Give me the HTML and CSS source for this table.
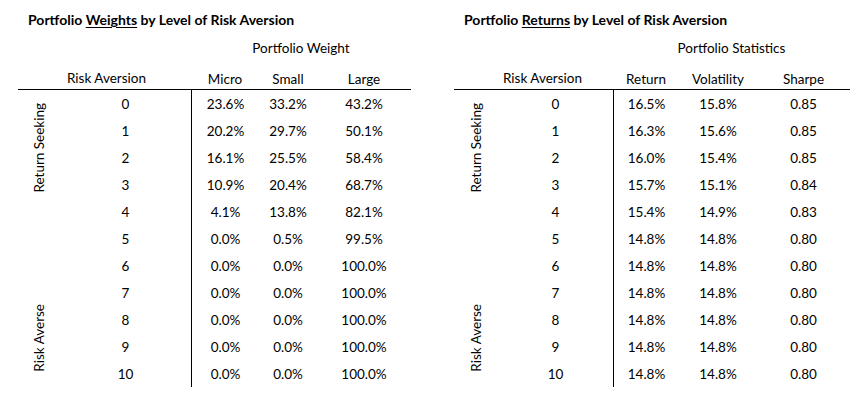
FILE: index.html
```html
<!DOCTYPE html>
<html>
<head>
<meta charset="utf-8">
<link rel="stylesheet" href="styles.css">
</head>
<body>
<div class="page">
  <section class="panel panel-weights">
    <h2 class="title">Portfolio <u>Weights</u> by Level of Risk Aversion</h2>
    <div class="grid">
      <div class="group">Portfolio Weight</div>
      <div class="colhead ra">Risk Aversion</div>
      <div class="colhead">Micro</div>
      <div class="colhead">Small</div>
      <div class="colhead">Large</div>
      <div class="side side-top"><span>Return Seeking</span></div>
      <div class="side side-bottom"><span>Risk Averse</span></div>

      <div class="num r0">0</div><div class="v c3 r0">23.6%</div><div class="v c4 r0">33.2%</div><div class="v c5 r0">43.2%</div>
      <div class="num r1">1</div><div class="v c3 r1">20.2%</div><div class="v c4 r1">29.7%</div><div class="v c5 r1">50.1%</div>
      <div class="num r2">2</div><div class="v c3 r2">16.1%</div><div class="v c4 r2">25.5%</div><div class="v c5 r2">58.4%</div>
      <div class="num r3">3</div><div class="v c3 r3">10.9%</div><div class="v c4 r3">20.4%</div><div class="v c5 r3">68.7%</div>
      <div class="num r4">4</div><div class="v c3 r4">4.1%</div><div class="v c4 r4">13.8%</div><div class="v c5 r4">82.1%</div>
      <div class="num r5">5</div><div class="v c3 r5">0.0%</div><div class="v c4 r5">0.5%</div><div class="v c5 r5">99.5%</div>
      <div class="num r6">6</div><div class="v c3 r6">0.0%</div><div class="v c4 r6">0.0%</div><div class="v c5 r6">100.0%</div>
      <div class="num r7">7</div><div class="v c3 r7">0.0%</div><div class="v c4 r7">0.0%</div><div class="v c5 r7">100.0%</div>
      <div class="num r8">8</div><div class="v c3 r8">0.0%</div><div class="v c4 r8">0.0%</div><div class="v c5 r8">100.0%</div>
      <div class="num r9">9</div><div class="v c3 r9">0.0%</div><div class="v c4 r9">0.0%</div><div class="v c5 r9">100.0%</div>
      <div class="num r10">10</div><div class="v c3 r10">0.0%</div><div class="v c4 r10">0.0%</div><div class="v c5 r10">100.0%</div>
    </div>
  </section>

  <section class="panel panel-returns">
    <h2 class="title">Portfolio <u>Returns</u> by Level of Risk Aversion</h2>
    <div class="grid">
      <div class="group">Portfolio Statistics</div>
      <div class="colhead ra">Risk Aversion</div>
      <div class="colhead">Return</div>
      <div class="colhead">Volatility</div>
      <div class="colhead">Sharpe</div>
      <div class="side side-top"><span>Return Seeking</span></div>
      <div class="side side-bottom"><span>Risk Averse</span></div>

      <div class="num r0">0</div><div class="v c3 r0">16.5%</div><div class="v c4 r0">15.8%</div><div class="v c5 r0">0.85</div>
      <div class="num r1">1</div><div class="v c3 r1">16.3%</div><div class="v c4 r1">15.6%</div><div class="v c5 r1">0.85</div>
      <div class="num r2">2</div><div class="v c3 r2">16.0%</div><div class="v c4 r2">15.4%</div><div class="v c5 r2">0.85</div>
      <div class="num r3">3</div><div class="v c3 r3">15.7%</div><div class="v c4 r3">15.1%</div><div class="v c5 r3">0.84</div>
      <div class="num r4">4</div><div class="v c3 r4">15.4%</div><div class="v c4 r4">14.9%</div><div class="v c5 r4">0.83</div>
      <div class="num r5">5</div><div class="v c3 r5">14.8%</div><div class="v c4 r5">14.8%</div><div class="v c5 r5">0.80</div>
      <div class="num r6">6</div><div class="v c3 r6">14.8%</div><div class="v c4 r6">14.8%</div><div class="v c5 r6">0.80</div>
      <div class="num r7">7</div><div class="v c3 r7">14.8%</div><div class="v c4 r7">14.8%</div><div class="v c5 r7">0.80</div>
      <div class="num r8">8</div><div class="v c3 r8">14.8%</div><div class="v c4 r8">14.8%</div><div class="v c5 r8">0.80</div>
      <div class="num r9">9</div><div class="v c3 r9">14.8%</div><div class="v c4 r9">14.8%</div><div class="v c5 r9">0.80</div>
      <div class="num r10">10</div><div class="v c3 r10">14.8%</div><div class="v c4 r10">14.8%</div><div class="v c5 r10">0.80</div>
    </div>
  </section>
</div>
</body>
</html>
```

FILE: styles.css
```css
html, body {
  margin: 0;
  padding: 0;
  background: #fff;
}

body {
  font-family: Lato, "Liberation Sans", sans-serif;
  font-size: 13.5px;
  color: #000;
}

.page {
  display: flex;
  gap: 43px;
  padding-left: 18px;
}

.panel-weights { width: 393px; }
.panel-returns { width: 396px; }

.title {
  margin: 0;
  padding: 10px 0 0 10px;
  height: 20px;
  line-height: 20px;
  font-size: 14px;
  font-weight: 700;
}

.title u {
  text-underline-offset: 2px;
}

.grid {
  display: grid;
  grid-template-rows: 36px 24px repeat(11, 27px);
}

.panel-weights .grid { grid-template-columns: 42px 131px 68px 58px 94px; }
.panel-returns .grid { grid-template-columns: 44px 115px 66px 78px 93px; }

.grid > div {
  display: flex;
  align-items: center;
  justify-content: center;
  white-space: nowrap;
}

.group {
  grid-row: 1;
  grid-column: 3 / 6;
}

.colhead {
  grid-row: 2;
  border-bottom: 1px solid #000;
  padding-top: 3px;
}

.colhead.ra {
  grid-column: 1 / 3;
  justify-content: flex-start;
  padding-left: 49px;
  padding-top: 0;
}

.side span {
  writing-mode: vertical-rl;
  transform: rotate(180deg);
}

.side-top { grid-column: 1; grid-row: 3 / 7; padding-top: 8px; }
.side-bottom { grid-column: 1; grid-row: 10 / 14; padding-top: 10px; }

.num { grid-column: 2; }
.c3 { grid-column: 3; border-left: 1px solid #000; }
.c4 { grid-column: 4; }
.c5 { grid-column: 5; }

.r0 { grid-row: 3; }
.r1 { grid-row: 4; }
.r2 { grid-row: 5; }
.r3 { grid-row: 6; }
.r4 { grid-row: 7; }
.r5 { grid-row: 8; }
.r6 { grid-row: 9; }
.r7 { grid-row: 10; }
.r8 { grid-row: 11; }
.r9 { grid-row: 12; }
.r10 { grid-row: 13; }
```
